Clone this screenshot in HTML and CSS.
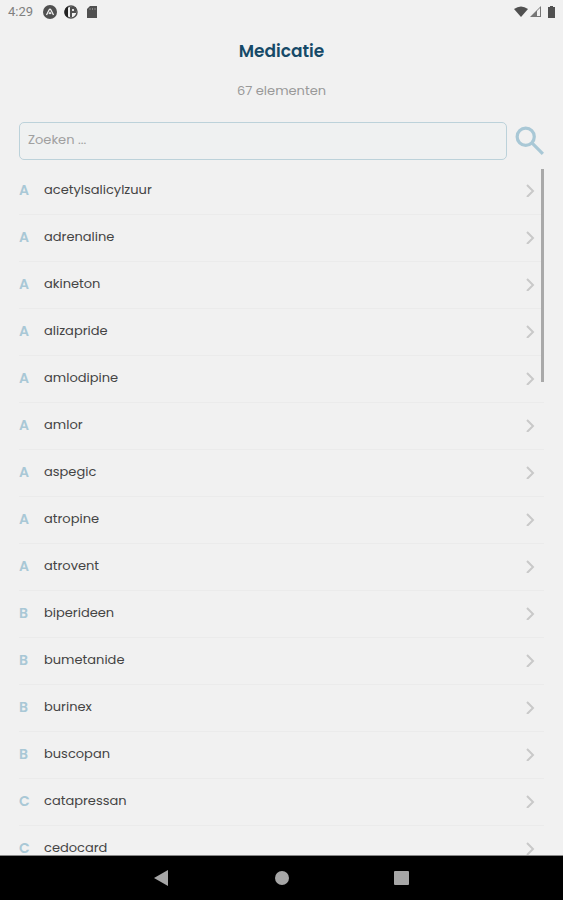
FILE: index.html
```html
<!DOCTYPE html>
<html lang="nl">
<head>
<meta charset="utf-8">
<meta name="viewport" content="width=device-width, initial-scale=1">
<title>Medicatie</title>
<link rel="stylesheet" href="styles.css">
</head>
<body>
<div class="status">
  <span class="clock">4:29</span>
  <svg class="status-icon" viewBox="0 0 14 14" aria-hidden="true"><circle cx="7" cy="7" r="7" fill="#505050"/><path d="M3.500 10 6 5Q7 3.500 8 5L10.500 10M6 9 7 7.500 8 9" fill="none" stroke="#f1f1f1" stroke-width="1.300"/></svg>
  <svg class="status-icon" viewBox="0 0 14 14" aria-hidden="true"><circle cx="7" cy="7" r="6" fill="#f1f1f1" stroke="#505050" stroke-width="1.500"/><path d="M4 1.500v11A6 6 0 0 1 4 1.500z" fill="#222"/><path d="M6 2h6v6H8v4H6z" fill="#505050"/><path d="M8 4h2v2H8z" fill="#e0e0e0"/></svg>
  <svg class="status-icon" viewBox="0 0 14 14" aria-hidden="true"><path d="M5 1h7v12H2V4z" fill="#505050"/><path d="M5 3v2M7.500 3v2M10 3v2" stroke="#888" stroke-width="1"/></svg>
  <svg class="signals" viewBox="0 0 42 14" aria-hidden="true"><path d="M1 4q7-5 14 0L8 12z" fill="#505050"/><path d="M28 1v11H17z" fill="#777"/><path d="M24 6l3-3v8h-3z" fill="#f1f1f1"/><path d="M35 2h2V1h3v1h2v11h-7z" fill="#505050"/></svg>
</div>
<header class="header">
  <h1 class="title">Medicatie</h1>
  <p class="count">67 elementen</p>
</header>
<form class="search" role="search">
  <input class="search-input" type="text" placeholder="Zoeken ..." aria-label="Zoeken">
  <button class="search-button" type="button" aria-label="Zoek">
    <svg viewBox="0 0 28 28" aria-hidden="true"><circle cx="10" cy="10" r="8"/><path d="M16 16 26 26"/></svg>
  </button>
</form>
<main class="content">
  <ul class="list" id="list"></ul>
  <div class="scroll-thumb"></div>
</main>
<nav class="navbar" aria-label="Systeem">
  <button class="nav-button" type="button" aria-label="Terug"><svg viewBox="0 0 16 16" aria-hidden="true"><path d="M0 8 14 0v16z"/></svg></button>
  <button class="nav-button" type="button" aria-label="Start"><svg viewBox="0 0 16 16" aria-hidden="true"><circle cx="8" cy="8" r="7"/></svg></button>
  <button class="nav-button" type="button" aria-label="Recent"><svg viewBox="0 0 16 16" aria-hidden="true"><rect y="1" width="15" height="14" rx="1"/></svg></button>
</nav>
<script src="app.js"></script>
</body>
</html>
```
FILE: styles.css
```css
* {
  box-sizing: border-box;
}

body {
  margin: 0;
  height: 100vh;
  display: flex;
  flex-direction: column;
  background: #f1f1f1;
  color: #444;
  font-family: Poppins, Inter, "Open Sans", sans-serif;
  font-size: 13px;
  line-height: 20px;
}

button {
  padding: 0;
  border: 0;
  background: none;
}

.status {
  display: flex;
  align-items: center;
  gap: 7px;
  height: 24px;
  padding: 0 8px;
}

.clock {
  margin-right: 3px;
  color: #808080;
  font-family: Roboto, sans-serif;
}

.status-icon {
  width: 14px;
  height: 14px;
}

.signals {
  width: 42px;
  height: 14px;
  margin-left: auto;
}

.header {
  padding-top: 17px;
  text-align: center;
}

.title {
  margin: 0;
  color: #164a68;
  font-size: 17px;
  font-weight: 600;
  line-height: 20px;
}

.count {
  margin: 20px 0;
  color: #999;
}

.search {
  display: flex;
  align-items: center;
  gap: 8px;
  padding: 1px 18px 0 19px;
}

.search-input {
  flex: 1;
  min-width: 0;
  height: 38px;
  padding: 0 8px 2px;
  border: 1px solid #bcd2da;
  border-radius: 5px;
  background: #eff1f1;
  color: #444;
  font: inherit;
}

.search-input::placeholder {
  color: #a0a0a0;
  opacity: 1;
}

.search-button {
  width: 30px;
  height: 30px;
}

.search-button svg {
  display: block;
  width: 30px;
  height: 30px;
  fill: none;
  stroke: #a9c8d6;
  stroke-width: 3;
}

.content {
  position: relative;
  flex: 1;
  min-height: 0;
  margin-top: 8px;
  padding: 0 19px;
  overflow: hidden;
}

.list {
  height: 100%;
  margin: 0;
  padding: 0;
  overflow-y: auto;
  list-style: none;
  scrollbar-width: none;
}

.row {
  display: flex;
  align-items: center;
  height: 47px;
  padding: 0 9px 2px 0;
  border-bottom: 1px solid #ebebeb;
  color: inherit;
  text-decoration: none;
}

.letter {
  width: 25px;
  color: #a9c8d6;
  font-size: 14px;
  font-weight: 600;
}

.name {
  flex: 1;
}

.chevron {
  width: 10px;
  height: 14px;
  fill: none;
  stroke: #c9c9c9;
  stroke-width: 2;
}

.scroll-thumb {
  position: absolute;
  top: 1px;
  right: 19px;
  width: 3px;
  height: 213px;
  background: #a9a9a9;
}

.navbar {
  display: flex;
  justify-content: center;
  gap: 104px;
  height: 45px;
  border-top: 1px solid #888;
  background: #000;
}

.nav-button {
  width: 16px;
}

.nav-button svg {
  display: block;
  width: 16px;
  height: 16px;
  fill: #a6a6a6;
}
```
FILE: app.js
```js
const names = [
  "acetylsalicylzuur", "adrenaline", "akineton", "alizapride", "amlodipine",
  "amlor", "aspegic", "atropine", "atrovent", "biperideen",
  "bumetanide", "burinex", "buscopan", "catapressan", "cedocard"
];

document.getElementById("list").innerHTML = names.map((name) => `
  <li>
    <a class="row" href="#${name}">
      <span class="letter">${name[0].toUpperCase()}</span>
      <span class="name">${name}</span>
      <svg class="chevron" viewBox="0 0 10 14" aria-hidden="true"><path d="M2 2 8 8 2 14"/></svg>
    </a>
  </li>`).join("");
```
